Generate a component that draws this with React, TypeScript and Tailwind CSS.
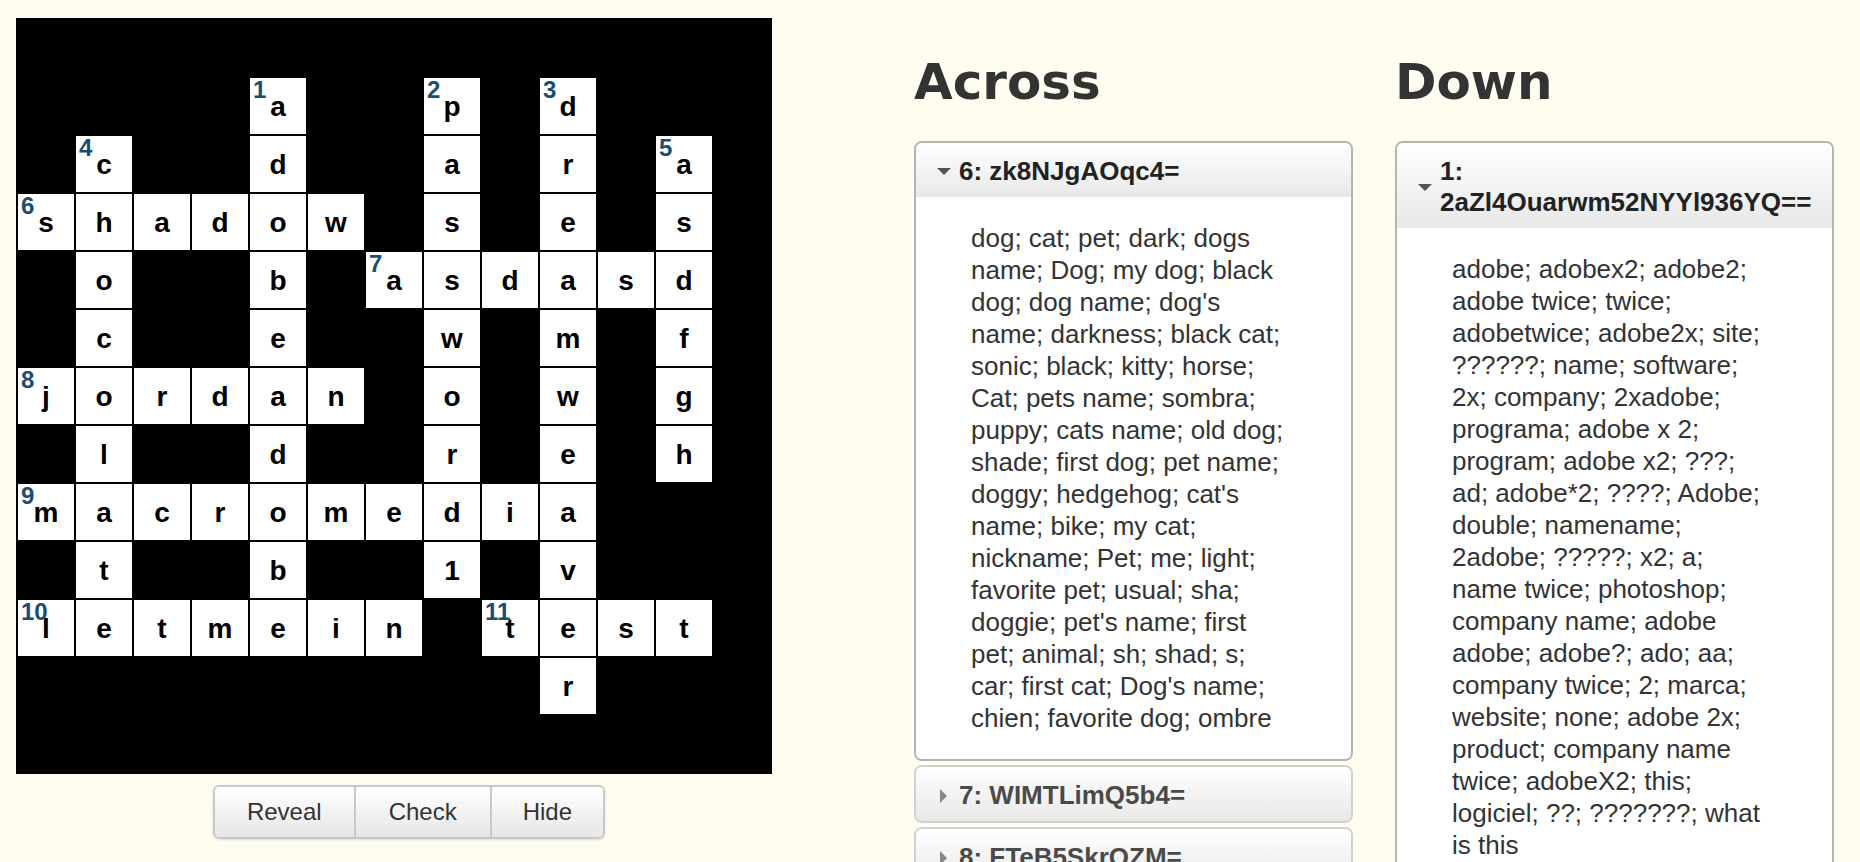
import React from 'react'

// crossword grid, '.' = black square
const rows = [
  '.............',
  '....a..p.d...',
  '.c..d..a.r.a.',
  'shadow.s.e.s.',
  '.o..b.asdasd.',
  '.c..e..w.m.f.',
  'jordan.o.w.g.',
  '.l..d..r.e.h.',
  'macromedia...',
  '.t..b..1.v...',
  'letmein.test.',
  '.........r...',
  '.............',
]

const numbers: Record<string, number> = {
  '1-4': 1,
  '1-7': 2,
  '1-9': 3,
  '2-1': 4,
  '2-11': 5,
  '3-0': 6,
  '4-6': 7,
  '6-0': 8,
  '8-0': 9,
  '10-0': 10,
  '10-8': 11,
}

const across = [
  {
    label: '6: zk8NJgAOqc4=',
    open: true,
    text: "dog; cat; pet; dark; dogs name; Dog; my dog; black dog; dog name; dog's name; darkness; black cat; sonic; black; kitty; horse; Cat; pets name; sombra; puppy; cats name; old dog; shade; first dog; pet name; doggy; hedgehog; cat's name; bike; my cat; nickname; Pet; me; light; favorite pet; usual; sha; doggie; pet's name; first pet; animal; sh; shad; s; car; first cat; Dog's name; chien; favorite dog; ombre",
  },
  { label: '7: WIMTLimQ5b4=', open: false, text: '' },
  { label: '8: FTeB5SkrQZM=', open: false, text: '' },
]

const down = [
  {
    label: '1: 2aZl4Ouarwm52NYYl936YQ==',
    open: true,
    text: 'adobe; adobex2; adobe2; adobe twice; twice; adobetwice; adobe2x; site; ??????; name; software; 2x; company; 2xadobe; programa; adobe x 2; program; adobe x2; ???; ad; adobe*2; ????; Adobe; double; namename; 2adobe; ?????; x2; a; name twice; photoshop; company name; adobe adobe; adobe?; ado; aa; company twice; 2; marca; website; none; adobe 2x; product; company name twice; adobeX2; this; logiciel; ??; ???????; what is this',
  },
]

function Cell({ ch, num }: { ch: string; num?: number }) {
  if (ch === '.') return <div className="h-[56px] w-[56px]" />
  return (
    <div className="relative flex h-[56px] w-[56px] items-center justify-center bg-white pt-[2px] text-[28px] font-bold leading-none text-black">
      {num && (
        <span className="absolute left-[3px] top-[0px] text-[24px] leading-none text-[#1b4d70]">{num}</span>
      )}
      {ch}
    </div>
  )
}

function Clue({ label, open, text }: { label: string; open: boolean; text: string }) {
  return (
    <div
      className={
        open
          ? 'overflow-hidden rounded-[8px] border-2 border-[#b4b4b4] bg-white'
          : 'mt-[4px] overflow-hidden rounded-[8px] border-2 border-[#d0d0d0]'
      }
    >
      <div className="flex items-center bg-linear-to-b from-white to-[#e8e8e8] pb-[10px] pl-[20px] pr-[14px] pt-[13px]">
        <span className="flex w-[15px] shrink-0 justify-center">
          {open ? (
            <span className="h-0 w-0 border-x-[7px] border-t-[7px] border-x-transparent border-t-[#555]" />
          ) : (
            <span className="h-0 w-0 border-y-[7px] border-l-[7px] border-y-transparent border-l-[#888]" />
          )}
        </span>
        <span
          className={
            open
              ? 'ml-[8px] text-[26px] font-bold leading-[31px] text-[#222]'
              : 'ml-[8px] text-[26px] font-bold leading-[31px] text-[#4a4a4a]'
          }
        >
          {label}
        </span>
      </div>
      {open && (
        <div className="bg-white pb-[25px] pl-[55px] pr-[60px] pt-[25px] text-[26px] leading-[32px] text-[#333]">
          {text}
        </div>
      )}
    </div>
  )
}

export default function App() {
  return (
    <div className="flex h-[862px] w-full overflow-hidden bg-[#fffdf0] font-['Liberation_Sans',Arial,sans-serif]">
      <div className="w-[802px] shrink-0 pl-[16px] pt-[18px]">
        <div className="grid w-[756px] grid-cols-[repeat(13,56px)] gap-[2px] bg-black p-[2px]">
          {rows.map((row, r) =>
            row.split('').map((ch, c) => <Cell key={`${r}-${c}`} ch={ch} num={numbers[`${r}-${c}`]} />)
          )}
        </div>

        <div className="mt-[11px] flex justify-center">
          <div className="flex overflow-hidden rounded-[6px] border-2 border-[#c8c8c8] shadow-sm">
            <button className="h-[50px] bg-linear-to-b from-white to-[#e6e6e6] px-[32px] text-[24px] text-[#333]">
              Reveal
            </button>
            <button className="h-[50px] border-l-2 border-[#c8c8c8] bg-linear-to-b from-white to-[#e6e6e6] px-[33px] text-[24px] text-[#333]">
              Check
            </button>
            <button className="h-[50px] border-l-2 border-[#c8c8c8] bg-linear-to-b from-white to-[#e6e6e6] px-[31px] text-[24px] text-[#333]">
              Hide
            </button>
          </div>
        </div>
      </div>

      <div className="ml-[112px] flex items-start gap-[42px] pt-[53px]">
        <div className="w-[439px]">
          <h1 className="mb-[30px] font-['DejaVu_Sans',sans-serif] text-[50px] font-bold leading-[58px] text-[#333]">
            Across
          </h1>
          {across.map((c) => (
            <Clue key={c.label} {...c} />
          ))}
        </div>
        <div className="w-[439px]">
          <h1 className="mb-[30px] font-['DejaVu_Sans',sans-serif] text-[50px] font-bold leading-[58px] text-[#333]">
            Down
          </h1>
          {down.map((c) => (
            <Clue key={c.label} {...c} />
          ))}
        </div>
      </div>
    </div>
  )
}
